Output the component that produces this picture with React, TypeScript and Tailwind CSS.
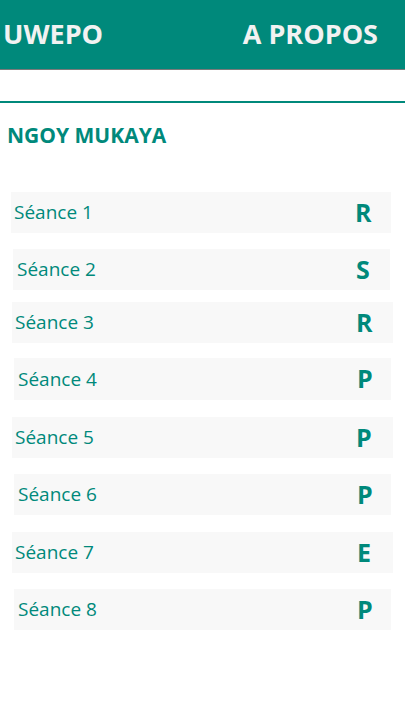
const font = { fontFamily: '"Open Sans", "Noto Sans", sans-serif' };

type Row = { label: string; code: string; box: string; lab: string };

const rows: Row[] = [
  { label: "Séance 1", code: "R", box: "mt-[0px] ml-[11px] w-[380px]", lab: "pl-[3px] w-[344px]" },
  { label: "Séance 2", code: "S", box: "mt-[16px] ml-[13px] w-[377px]", lab: "pl-[4px] w-[343px]" },
  { label: "Séance 3", code: "R", box: "mt-[12px] ml-[12px] w-[381px]", lab: "pl-[3px] w-[344px]" },
  { label: "Séance 4", code: "P", box: "mt-[15px] ml-[14px] w-[377px] h-[42px]", lab: "pl-[4px] w-[343px]" },
  { label: "Séance 5", code: "P", box: "mt-[17px] ml-[12px] w-[381px]", lab: "pl-[3px] w-[344px]" },
  { label: "Séance 6", code: "P", box: "mt-[16px] ml-[14px] w-[377px]", lab: "pl-[4px] w-[343px]" },
  { label: "Séance 7", code: "E", box: "mt-[17px] ml-[12px] w-[381px]", lab: "pl-[3px] w-[345px]" },
  { label: "Séance 8", code: "P", box: "mt-[16px] ml-[14px] w-[377px]", lab: "pl-[4px] w-[343px]" },
];

export default function App() {
  return (
    <div className="w-[405px] h-[720px] bg-white" style={font}>
      {/* top bar */}
      <div className="h-[70px] bg-[#00897b] border-b border-[#7a7a7a] flex items-center justify-between pl-[3px] pr-[27px]">
        <span className="text-[27px] font-bold text-[#f2f2f2]">UWEPO</span>
        <span className="text-[27px] font-bold text-[#f2f2f2]">A PROPOS</span>
      </div>

      <div className="mt-[31px] h-[2px] bg-[#00897b]" />

      <h2 className="mt-[18px] pl-[7px] text-[21px] leading-[28px] font-bold text-[#00897b]">
        NGOY MUKAYA
      </h2>

      <div className="mt-[43px] flex flex-col">
        {rows.map((r) => (
          <div key={r.label} className={`flex items-center h-[41px] bg-[#f8f8f8] ${r.box}`}>
            <span className={`text-[19px] text-[#00897b] ${r.lab}`}>{r.label}</span>
            <span className="text-[25px] font-bold text-[#00897b]">{r.code}</span>
          </div>
        ))}
      </div>
    </div>
  );
}
